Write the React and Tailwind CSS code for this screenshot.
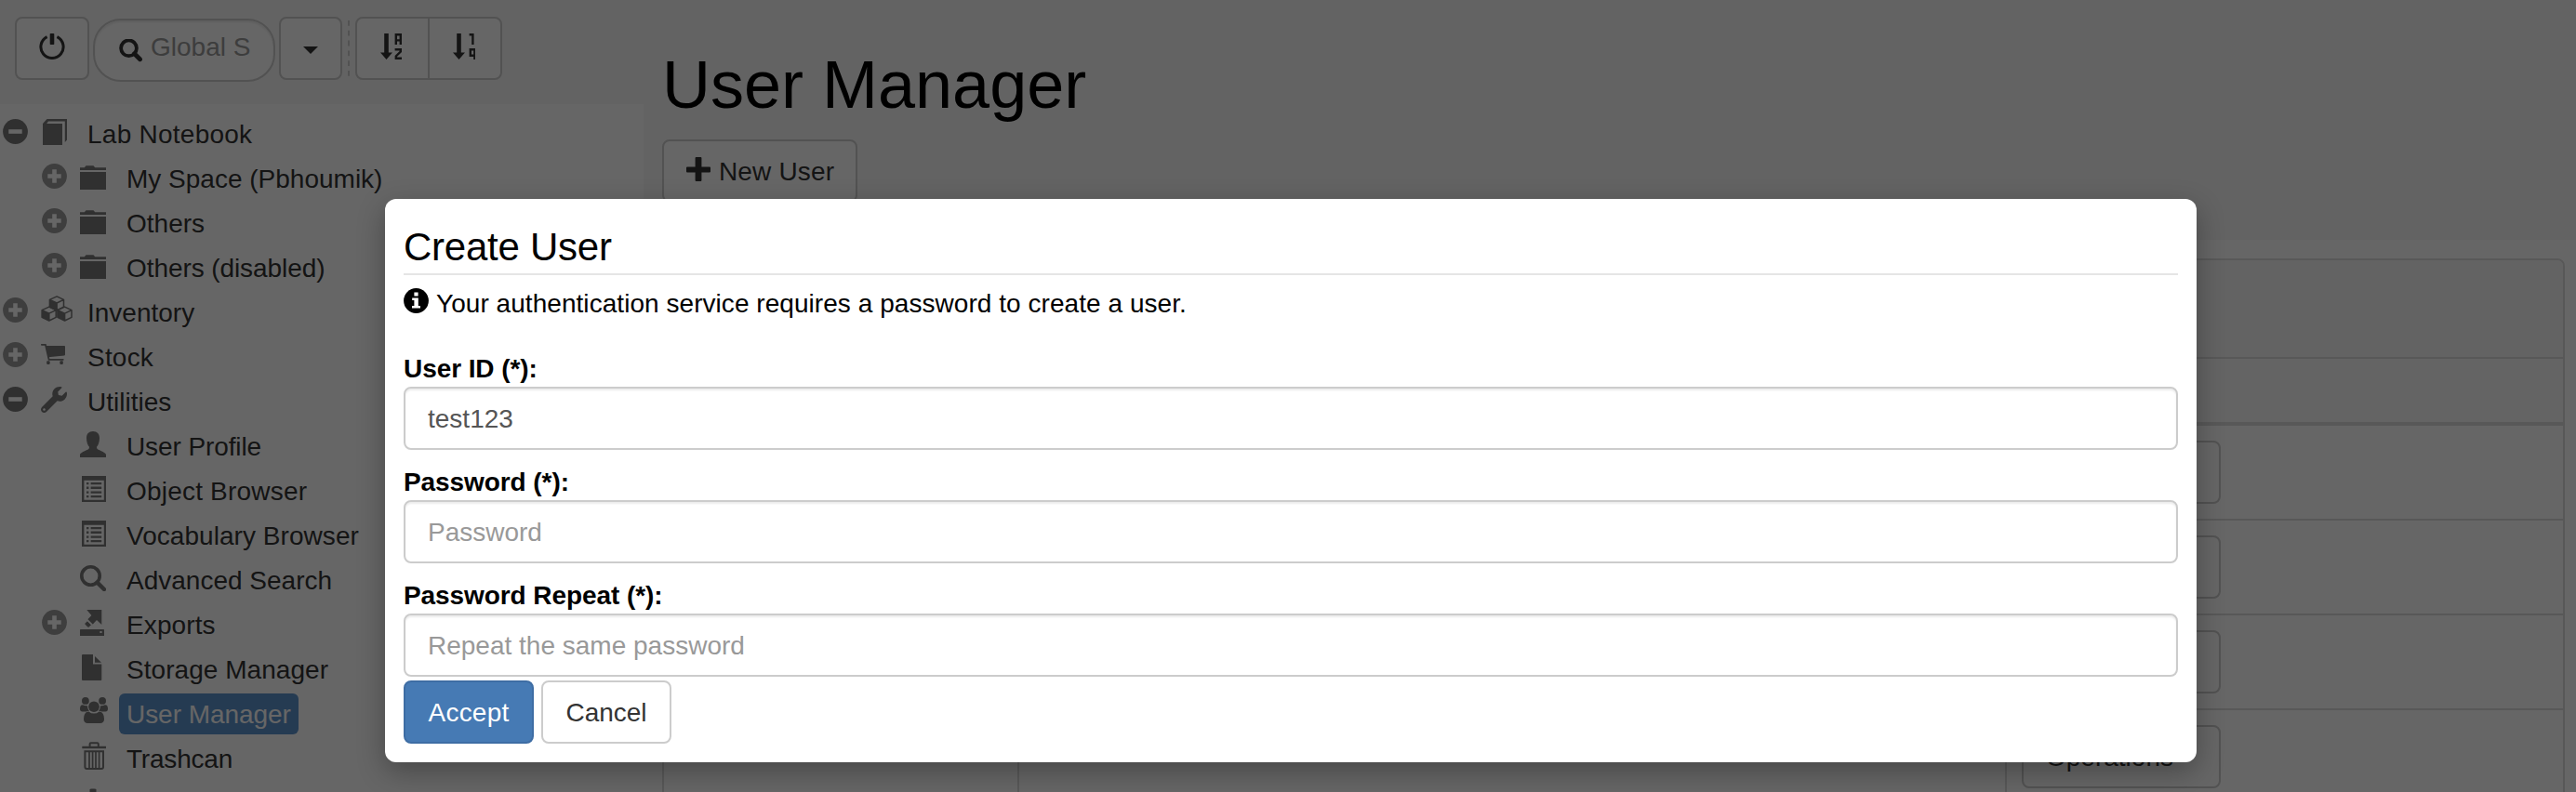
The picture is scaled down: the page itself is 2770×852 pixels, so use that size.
import React from "react";
import { FaWrench, FaCog } from "react-icons/fa";

const Svg = ({ w = 28, h = 28, className = "", children }) => (
  <svg width={w} height={h} viewBox={`0 0 ${w} ${h}`} fill="currentColor" className={`block shrink-0 ${className}`}>
    {children}
  </svg>
);

const Book = () => (
  <Svg>
    <path d="M0 28V5L4.5 0H26V22.5L23.8 25V2.6H6L4.2 5H21V28Z" />
  </Svg>
);
const Folder = () => (
  <Svg>
    <path d="M0 4.2H4.8L6.5 2.3H14.5L16.2 4.2H28V7H0ZM0 9H28V28H0Z" />
  </Svg>
);
const Cubes = () => (
  <Svg w={34}>
    {["translate(8.5 -0.2)", "translate(0.2 11)", "translate(17 11)"].map((t) => (
      <g key={t} transform={t}>
        <path d="M0.9 4.6L8.6 8V16L0.9 12.4Z" />
        <path
          d="M0.9 4.6L8.6 1.1L16 4.6V12.3L8.6 16L0.9 12.3ZM0.9 4.6L8.6 8.2L16 4.6M8.6 8.2V16"
          fill="none"
          stroke="currentColor"
          strokeWidth="1.5"
          strokeLinejoin="round"
        />
      </g>
    ))}
  </Svg>
);
const Cart = () => (
  <Svg>
    <path d="M0.8 2.8H4.9L8.6 18.8H23.8" fill="none" stroke="currentColor" strokeWidth="1.8" strokeLinecap="round" />
    <path d="M5.4 4H25.3Q26 4 26 4.8V13.5Q26 14.3 25.2 14.4L7.8 16.2Z" />
    <rect x="6.2" y="20.2" width="3.4" height="3.9" rx="1" />
    <rect x="20.4" y="20.2" width="3.4" height="3.9" rx="1" />
  </Svg>
);
const Wrench = () => <FaWrench size={28} className="block shrink-0" />;
const Person = () => (
  <Svg>
    <path d="M14 0C18.6 0 21 3 21 7.2C21 11.6 19.6 15 18 16.8C18 18.6 18.6 19.3 20.4 20C23.6 21.4 28 23.4 28 25.2V28H0V25.2C0 23.4 4.4 21.4 7.6 20C9.4 19.3 10 18.6 10 16.8C8.4 15 7 11.6 7 7.2C7 3 9.4 0 14 0Z" />
  </Svg>
);
const ListAlt = () => (
  <Svg>
    <path fillRule="evenodd" d="M2 0H28V28H2ZM4.4 4.8V25.8H25.8V4.8Z" />
    {[7, 11.6, 16.4, 21].map((y) => (
      <path key={y} d={`M7 ${y}H9.4V${y + 2.3}H7ZM11.6 ${y}H23.2V${y + 2.3}H11.6Z`} />
    ))}
  </Svg>
);
const Magnifier = () => (
  <Svg>
    <circle cx="11.5" cy="11.5" r="9.7" fill="none" stroke="currentColor" strokeWidth="3.6" />
    <path d="M18.6 18.6L26 26" stroke="currentColor" strokeWidth="4.4" strokeLinecap="round" />
  </Svg>
);
const Exports = () => (
  <Svg>
    <path d="M7.3 0H23.3V16L18 10.9L12.9 16.4L7.6 11L12.4 6Z" />
    <path d="M8 11.4L12 15.4L9.2 18.2L8.2 18L5.2 15L5.2 14.2Z" transform="translate(0.2 0.6)" />
    <path d="M6.6 9.6L13.6 16.6" stroke="#fff" strokeWidth="1.6" />
    <path fillRule="evenodd" d="M0.6 21H25.4L26 21.6V28H0V21.6ZM21.4 23V25H23.6V23Z" />
  </Svg>
);
const FileIcon = () => (
  <Svg>
    <path d="M3 0H14V10.6H23.3V27Q23.3 28 22.3 28H3Q2 28 2 27V1Q2 0 3 0ZM16 2L23 8.8H16Z" />
  </Svg>
);
const Users = () => (
  <Svg w={30}>
    <circle cx="5.9" cy="3.9" r="3.9" />
    <circle cx="24.1" cy="3.9" r="3.9" />
    <path d="M3 8.2Q5.8 9.8 8 9.2Q8 12.6 10 14.8Q8 15 6.6 15.6H2.6Q0 15.4 0 12.6Q0 8.2 3 8.2ZM27 8.2Q24.2 9.8 22 9.2Q22 12.6 20 14.8Q22 15 23.4 15.6H27.4Q30 15.4 30 12.6Q30 8.2 27 8.2Z" />
    <circle cx="15" cy="10.2" r="5.8" />
    <path d="M9.4 15.4Q12 17.6 15 17.6Q18 17.6 20.6 15.4Q26 15.6 26 23.6Q26 28 21.6 28H8.4Q4 28 4 23.6Q4 15.6 9.4 15.4Z" />
  </Svg>
);
const Trash = () => (
  <Svg h={30}>
    <g fill="none" stroke="currentColor" strokeWidth="2">
      <path d="M10.6 5V2.4Q10.6 1.2 11.8 1.2H18.6Q19.8 1.2 19.8 2.4V5" />
      <path d="M2.3 6H28" strokeWidth="2.4" />
      <path d="M5.4 9.2V27Q5.4 29 7.4 29H23Q25 29 25 27V9.2M4.4 10.2H26" />
      <path d="M10 10V28M13.6 10V28M17 10V28M20.6 10V28" strokeWidth="1.7" />
    </g>
  </Svg>
);
const Cog = () => <FaCog size={28} className="block shrink-0" />;

const Expander = ({ open }) => (
  <Svg w={27} h={27} className={open ? "text-[#787878]" : "text-[#9c9c9c]"}>
    <circle cx="13.5" cy="13.5" r="13.4" />
    <path d={open ? "M6.3 13.5H20.7" : "M6.3 13.5H20.7M13.5 6.3V20.7"} stroke="#fff" strokeWidth="4.6" />
  </Svg>
);

const rows = [
  { label: "Lab Notebook", level: 0, exp: "open", icon: Book, pad: 2, track: "tracking-[0.25px]" },
  { label: "My Space (Pbhoumik)", level: 1, exp: "closed", icon: Folder },
  { label: "Others", level: 1, exp: "closed", icon: Folder },
  { label: "Others (disabled)", level: 1, exp: "closed", icon: Folder, track: "tracking-[-0.08px]" },
  { label: "Inventory", level: 0, exp: "closed", icon: Cubes, high: true },
  { label: "Stock", level: 0, exp: "closed", icon: Cart, track: "tracking-[0.2px]" },
  { label: "Utilities", level: 0, exp: "open", icon: Wrench },
  { label: "User Profile", level: 1, icon: Person, track: "tracking-[-0.1px]" },
  { label: "Object Browser", level: 1, icon: ListAlt, track: "tracking-[0.2px]" },
  { label: "Vocabulary Browser", level: 1, icon: ListAlt, track: "tracking-[0.05px]" },
  { label: "Advanced Search", level: 1, icon: Magnifier },
  { label: "Exports", level: 1, exp: "closed", icon: Exports, track: "tracking-[0.1px]" },
  { label: "Storage Manager", level: 1, icon: FileIcon, track: "tracking-[0.05px]" },
  { label: "User Manager", level: 1, icon: Users, selected: true, high: true, track: "tracking-[-0.05px]" },
  { label: "Trashcan", level: 1, icon: Trash, high: true, track: "tracking-[-0.2px]" },
  { label: "", level: 1, icon: Cog },
];

const TreeRow = ({ label, level, exp, icon: Icon, selected, high, pad, track = "" }) => (
  <div className={`flex h-12 shrink-0 items-start ${level ? "pl-[45px]" : "pl-[3px]"}`}>
    <div className="w-[41px] shrink-0 pt-[8px]">{exp && <Expander open={exp === "open"} />}</div>
    <div className={`w-[42px] shrink-0 text-[#787878] ${high ? "pt-[6px]" : "pt-[8px]"} ${pad ? "pl-[2px]" : ""}`}>
      <Icon />
    </div>
    {label && (
      <span
        className={`mt-[2px] whitespace-nowrap rounded-[6px] px-[8px] pt-[2px] leading-[42px] ${track} ${
          selected ? "bg-[#5e93cd] text-white" : "text-[#333]"
        }`}
      >
        {label}
      </span>
    )}
  </div>
);

const SortArrow = ({ children }) => (
  <Svg w={24}>
    <path d="M4.2 0H8.8V20.4H13L6.5 28L0 20.4H4.2Z" />
    <g fill="none" stroke="currentColor" strokeWidth="2.4">
      {children}
    </g>
  </Svg>
);

const Toolbar = () => (
  <div className="flex h-28 shrink-0 items-start bg-[#f8f8f8] pl-4 pt-[18px] text-[#333]">
    <div className="flex h-[68px] w-20 items-start justify-center rounded-[8px] border-2 border-[#ccc] bg-white pt-4">
      <Svg>
        <path d="M8.6 3.6A12.1 12.1 0 1 0 19.4 3.6" fill="none" stroke="currentColor" strokeWidth="3" />
        <rect x="11.7" y="0" width="4.6" height="12" rx="0.8" />
      </Svg>
    </div>
    <div className="ml-1 mt-[2px] flex h-[68px] w-[196px] items-center overflow-hidden rounded-[30px] border-2 border-[#ccc] bg-white pl-[26px] shadow-[inset_0_2px_2px_rgba(0,0,0,0.075)]">
      <Svg w={26} h={26} className="mt-[2px] blur-[0.7px]">
        <circle cx="10.5" cy="9.8" r="8.4" fill="none" stroke="currentColor" strokeWidth="3.8" />
        <path d="M16.5 15.8L22.5 21.8" stroke="currentColor" strokeWidth="4.8" strokeLinecap="round" />
      </Svg>
      <span className="-mt-[6px] ml-[8px] whitespace-nowrap text-[#999]">Global S</span>
    </div>
    <div className="ml-1 flex h-[68px] w-[68px] items-start justify-center rounded-[8px] border-2 border-[#ccc] bg-white pt-[30px]">
      <Svg w={16} h={8}>
        <path d="M0 0H16L8 8Z" />
      </Svg>
    </div>
    <svg width="2" height="60" className="ml-[6px] mt-1 block text-[#ccc]">
      <path d="M1 0V60" stroke="currentColor" strokeWidth="2" strokeDasharray="5.8 5" />
    </svg>
    <div className="ml-[6px] flex h-[68px] w-[158px] rounded-[8px] border-2 border-[#ccc] bg-white">
      <div className="flex w-[78px] border-r-2 border-[#ccc] pl-[25px] pt-4">
        <SortArrow>
          <path d="M16.8 12V1.2H21.8V12M16.8 7.4H21.8" />
          <path d="M15.6 17.2H21.8V19.5L16.8 24.5V26.8H23" />
        </SortArrow>
      </div>
      <div className="flex pl-[25px] pt-4">
        <SortArrow>
          <path d="M17.6 1.2H21.4V12" />
          <path d="M23.6 23.8H18.8V17.2H23.9M23.4 16V28" />
        </SortArrow>
      </div>
    </div>
  </div>
);

const UserRow = () => (
  <div className="flex h-[102px] shrink-0 border-b-2 border-[#ddd]">
    <div className="w-[382px] shrink-0 border-r-2 border-[#ddd]" />
    <div className="w-[1062px] shrink-0 border-r-2 border-[#ddd]" />
    <div className="pl-4 pt-4">
      <div className="flex h-[68px] w-[214px] items-center gap-[6px] rounded-[8px] border-2 border-[#ccc] bg-white pl-6 text-[#333]">
        <span className="pt-[2px]">Operations</span>
        <Svg w={16} h={8}>
          <path d="M0 0H16L8 8Z" />
        </Svg>
      </div>
    </div>
  </div>
);

const Main = () => (
  <div className="flex min-w-0 flex-1 flex-col">
    <div className="h-[258px] shrink-0 bg-[#f8f8f8] pl-5">
      <h1 className="pt-[51px] text-[72px] leading-[80px] text-black">User Manager</h1>
      <div className="mt-[19px] flex h-[68px] w-[210px] items-center rounded-[8px] border-2 border-[#ccc] bg-white pl-6 text-[#333]">
        <Svg w={26} className="-mt-[2px]">
          <path d="M9.6 1Q9.6 0 10.6 0H15.4Q16.4 0 16.4 1V10.4H25Q26 10.4 26 11.4V15.6Q26 16.6 25 16.6H16.4V25Q16.4 26 15.4 26H10.6Q9.6 26 9.6 25V16.6H1Q0 16.6 0 15.6V11.4Q0 10.4 1 10.4H9.6Z" />
        </Svg>
        <span className="ml-[9px] whitespace-nowrap pt-[2px] tracking-[0.15px]">New User</span>
      </div>
    </div>
    <div className="ml-5 mr-3 mt-5 flex h-[600px] shrink-0 flex-col overflow-hidden rounded-t-[8px] border-2 border-[#ddd] bg-white">
      <div className="h-[106px] shrink-0 border-b-2 border-[#ddd] bg-[#f7f7f7]" />
      <div className="h-[72px] shrink-0 border-b-4 border-[#ddd] bg-[#f9f9f9]" />
      <div className="flex flex-col">
        <UserRow />
        <UserRow />
        <UserRow />
        <UserRow />
      </div>
    </div>
  </div>
);

const Field = ({ label, value, placeholder }) => (
  <label className="block h-[122px]">
    <span className="block h-[40px] font-bold leading-[42px] tracking-[-0.08px]">{label}</span>
    <input
      readOnly
      value={value}
      placeholder={placeholder}
      className="block h-[68px] w-full rounded-[8px] border-2 border-[#ccc] bg-white px-6 pt-[2px] text-[28px] text-[#555] shadow-[inset_0_2px_2px_rgba(0,0,0,0.075)] outline-none placeholder:text-[#999]"
    />
  </label>
);

const Modal = () => (
  <div className="absolute left-[414px] top-[214px] h-[606px] w-[1948px] rounded-[12px] bg-white px-5 text-black shadow-[0_10px_30px_rgba(0,0,0,0.3)]">
    <h2 className="h-[82px] border-b-2 border-[#e5e5e5] pt-[28px] text-[42px] leading-[48px] tracking-[-0.25px]">
      Create User
    </h2>
    <div className="flex h-[80px] items-start pt-[14px]">
      <Svg w={27} h={27}>
        <circle cx="13.5" cy="13.5" r="13.4" />
        <path fill="#fff" d="M11.4 4.6H15.6V8.4H11.4ZM9.2 10.6H15.8V19H18V21.6H9V19H11.4V13H9.2Z" />
      </Svg>
      <span className="ml-[8px] mt-px leading-[32px] tracking-[0.05px]">
        Your authentication service requires a password to create a user.
      </span>
    </div>
    <Field label="User ID (*):" value="test123" />
    <Field label="Password (*):" value="" placeholder="Password" />
    <Field label="Password Repeat (*):" value="" placeholder="Repeat the same password" />
    <div className="-mt-[10px] flex gap-2">
      <button className="h-[68px] w-[140px] rounded-[8px] border-2 border-[#3e6da4] bg-[#467ab4] pt-[2px] text-center tracking-[0.2px] text-white">
        Accept
      </button>
      <button className="h-[68px] w-[140px] rounded-[8px] border-2 border-[#ccc] bg-white pt-[2px] text-center text-[#333]">
        Cancel
      </button>
    </div>
  </div>
);

export default function App() {
  return (
    <div className="relative flex h-[852px] w-[2770px] overflow-hidden bg-white font-['Liberation_Sans',Arial,sans-serif] text-[28px] leading-[40px]">
      <div className="flex w-[692px] shrink-0 flex-col">
        <Toolbar />
        <div className="flex flex-col pt-2">
          {rows.map((r, i) => (
            <TreeRow key={i} {...r} />
          ))}
        </div>
      </div>
      <Main />
      <div className="absolute inset-0 bg-black/60" />
      <Modal />
    </div>
  );
}
